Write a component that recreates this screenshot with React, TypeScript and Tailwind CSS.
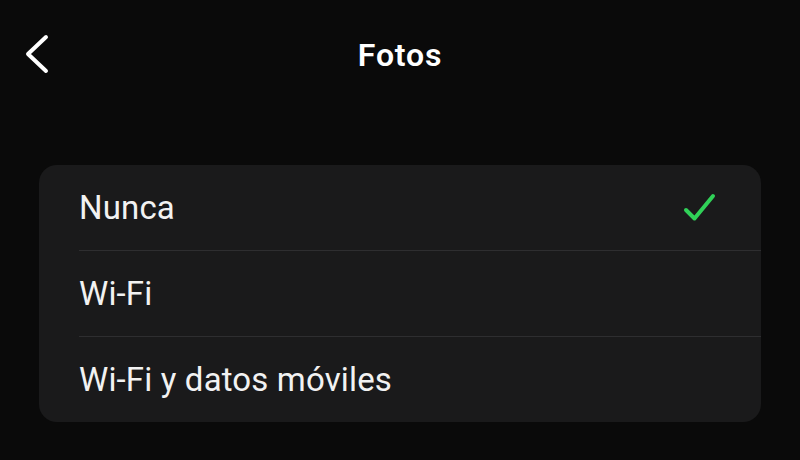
import React from "react";

const options = ["Nunca", "Wi-Fi", "Wi-Fi y datos móviles"];

export default function App() {
  const selected = 0;

  return (
    <div
      className="w-[800px] h-[460px] bg-[#0a0a0a] text-white overflow-hidden"
      style={{ fontFamily: "Roboto, 'Liberation Sans', sans-serif" }}
    >
      {/* Header */}
      <div className="relative h-[108px] flex items-center justify-center">
        <button className="absolute left-[22px] top-[32px] w-[32px] h-[44px] flex items-center justify-center" aria-label="Atrás">
          <svg width="32" height="44" viewBox="0 0 32 44">
            <path
              d="M24 5 L6 22 L24 39"
              fill="none"
              stroke="white"
              strokeWidth="4"
              strokeLinecap="round"
              strokeLinejoin="round"
            />
          </svg>
        </button>
        <h1 className="text-[32px] font-semibold tracking-[0.8px] pt-[2px]">Fotos</h1>
      </div>

      {/* Options card */}
      <div className="mt-[57px] mx-[39px] rounded-[18px] bg-[#1a1a1b] overflow-hidden">
        {options.map((label, i) => (
          <div key={label} className="pl-[40px]">
            <div
              className={
                i < options.length - 1
                  ? "h-[86px] flex items-center justify-between pr-[44px] border-b border-[#2e2e30]"
                  : "h-[85px] flex items-center justify-between pr-[44px]"
              }
            >
              <span className="text-[33px] leading-none tracking-[0.15px] text-[#f2f2f2]">{label}</span>
              {i === selected && (
                <svg width="34" height="32" viewBox="0 0 34 32">
                  <path
                    d="M3 18 L11.5 26.5 L30 4"
                    fill="none"
                    stroke="#30d158"
                    strokeWidth="4"
                    strokeLinecap="round"
                    strokeLinejoin="round"
                  />
                </svg>
              )}
            </div>
          </div>
        ))}
      </div>
    </div>
  );
}
